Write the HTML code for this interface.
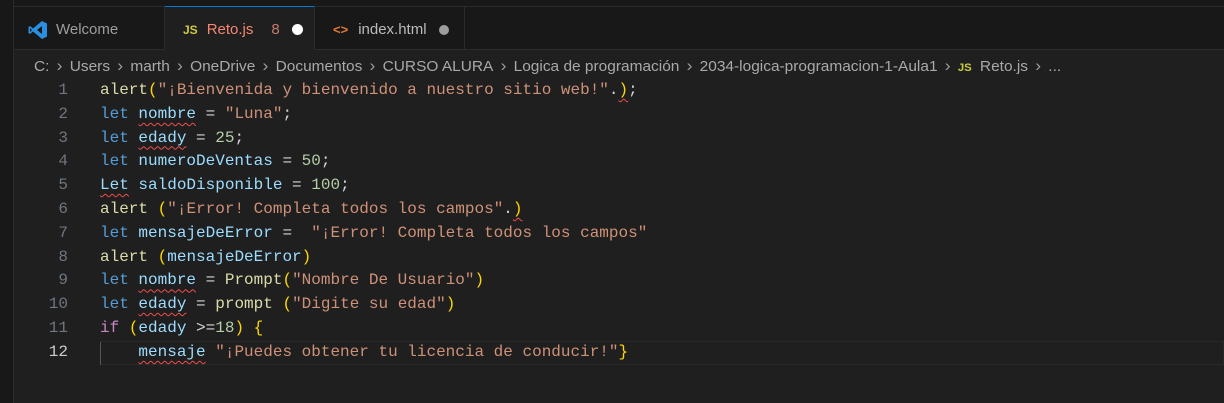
<!DOCTYPE html>
<html><head><meta charset="utf-8"><style>
*{margin:0;padding:0;box-sizing:border-box}
body{width:1224px;height:403px;background:#1f1f1f;overflow:hidden;position:relative;font-family:"Liberation Sans",sans-serif}
.left{position:absolute;left:0;top:0;width:14px;height:403px;background:#181818;border-right:1px solid #2b2b2b}
.top{position:absolute;left:0;top:0;width:1224px;height:7px;background:#181818;border-bottom:1px solid #2b2b2b}
.tabs{position:absolute;left:14px;top:7px;width:1210px;height:43px;background:#181818;border-bottom:1px solid #2b2b2b}
.tab{position:absolute;top:0;height:43px;font-size:15px;color:#9d9d9d;display:flex;align-items:center;border-right:1px solid #2b2b2b;padding-top:2px}
.tab.act{background:#1f1f1f;border-top:1px solid #0078d4;height:44px;color:#f48771}
.crumb{position:absolute;left:34px;top:56px;font-size:15px;color:#a9a9a9;white-space:nowrap;transform-origin:0 0;transform:scaleX(1.03)}
.crumb .s{color:#9d9d9d;margin:0 7px;font-size:17px}
.code{position:absolute;left:0;top:79px;font-family:"Liberation Mono",monospace;font-size:16px;line-height:23.8px;white-space:pre}
.ln{position:absolute;left:30px;width:38px;text-align:right;color:#6e7681}
.tx{position:absolute;left:100px;color:#9cdcfe}
.k{color:#569cd6}.f{color:#dcdcaa}.s2{color:#ce9178}.n{color:#b5cea8}.w{color:#d4d4d4}.y{color:#ffd700}.p{color:#c586c0}
.sq{text-decoration:underline wavy #f14c4c;text-underline-offset:4px;text-decoration-thickness:1px}
.hl{position:absolute;left:100px;top:341px;width:1124px;height:24px;border:1px solid #282828}
</style></head><body>
<div class="top"></div>
<div class="left"></div>
<div class="tabs">
 <div class="tab" style="left:0;width:151px"><svg style="margin-left:14px;margin-right:8px" width="20" height="20" viewBox="0 0 20 20"><path d="M14 1 L19 3.5 V16.5 L14 19 L5 11.5 L2 14 L0.5 13 V7 L2 6 L5 8.5 Z M14 6 L9 10 L14 14 Z M2 8 V12 L4 10 Z" fill="#2a8fe0" fill-rule="evenodd"/></svg>Welcome</div>
 <div class="tab act" style="left:151px;width:150px;top:-1px"><span style="color:#cbcb41;font-weight:bold;font-size:12px;margin-left:18px;margin-right:9px">JS</span>Reto.js<span style="margin-left:18px;color:#c57a6e">8</span><span style="display:inline-block;width:11px;height:11px;border-radius:50%;background:#fff;margin-left:12px"></span></div>
 <div class="tab" style="left:301px;width:150px"><span style="color:#e37933;font-weight:bold;font-size:13px;margin-left:18px;margin-right:10px">&lt;&gt;</span><span style="color:#bbb">index.html</span><span style="display:inline-block;width:10px;height:10px;border-radius:50%;background:#9d9d9d;margin-left:12px"></span></div>
</div>
<div class="crumb">C:<span class="s">›</span>Users<span class="s">›</span>marth<span class="s">›</span>OneDrive<span class="s">›</span>Documentos<span class="s">›</span>CURSO ALURA<span class="s">›</span>Logica de programación<span class="s">›</span>2034-logica-programacion-1-Aula1<span class="s">›</span><span style="color:#cbcb41;font-weight:bold;font-size:11px;margin-right:8px">JS</span>Reto.js<span class="s">›</span>...</div>
<div class="hl"></div>
<div class="code">
<div class="ln" style="top:0">1</div><div class="tx" style="top:0"><span class="f">alert</span><span class="y">(</span><span class="s2">"¡Bienvenida y bienvenido a nuestro sitio web!"</span><span class="w">.</span><span class="y sq">)</span><span class="w">;</span></div>
<div class="ln" style="top:23.8px">2</div><div class="tx" style="top:23.8px"><span class="k">let</span> <span class="sq">nombre</span><span class="w"> = </span><span class="s2">"Luna"</span><span class="w">;</span></div>
<div class="ln" style="top:47.6px">3</div><div class="tx" style="top:47.6px"><span class="k">let</span> <span class="sq">edady</span><span class="w"> = </span><span class="n">25</span><span class="w">;</span></div>
<div class="ln" style="top:71.4px">4</div><div class="tx" style="top:71.4px"><span class="k">let</span> numeroDeVentas<span class="w"> = </span><span class="n">50</span><span class="w">;</span></div>
<div class="ln" style="top:95.2px">5</div><div class="tx" style="top:95.2px"><span class="sq">Let</span> saldoDisponible<span class="w"> = </span><span class="n">100</span><span class="w">;</span></div>
<div class="ln" style="top:119px">6</div><div class="tx" style="top:119px"><span class="f">alert</span> <span class="y">(</span><span class="s2">"¡Error! Completa todos los campos"</span><span class="w">.</span><span class="y sq">)</span></div>
<div class="ln" style="top:142.8px">7</div><div class="tx" style="top:142.8px"><span class="k">let</span> mensajeDeError<span class="w"> =  </span><span class="s2">"¡Error! Completa todos los campos"</span></div>
<div class="ln" style="top:166.6px">8</div><div class="tx" style="top:166.6px"><span class="f">alert</span> <span class="y">(</span>mensajeDeError<span class="y">)</span></div>
<div class="ln" style="top:190.4px">9</div><div class="tx" style="top:190.4px"><span class="k">let</span> <span class="sq">nombre</span><span class="w"> = </span><span class="f">Prompt</span><span class="y">(</span><span class="s2">"Nombre De Usuario"</span><span class="y">)</span></div>
<div class="ln" style="top:214.2px">10</div><div class="tx" style="top:214.2px"><span class="k">let</span> <span class="sq">edady</span><span class="w"> = </span><span class="f">prompt</span> <span class="y">(</span><span class="s2">"Digite su edad"</span><span class="y">)</span></div>
<div class="ln" style="top:238px">11</div><div class="tx" style="top:238px"><span class="p">if</span> <span class="y">(</span>edady <span class="w">&gt;=</span><span class="n">18</span><span class="y">)</span> <span class="y">{</span></div>
<div class="ln" style="top:261.8px;color:#ccc">12</div><div class="tx" style="top:261.8px">    <span class="sq">mensaje</span> <span class="s2">"¡Puedes obtener tu licencia de conducir!"</span><span class="y">}</span></div>
</div>
<div style="position:absolute;left:100px;top:342px;width:1px;height:23px;background:#555"></div>
</body></html>
